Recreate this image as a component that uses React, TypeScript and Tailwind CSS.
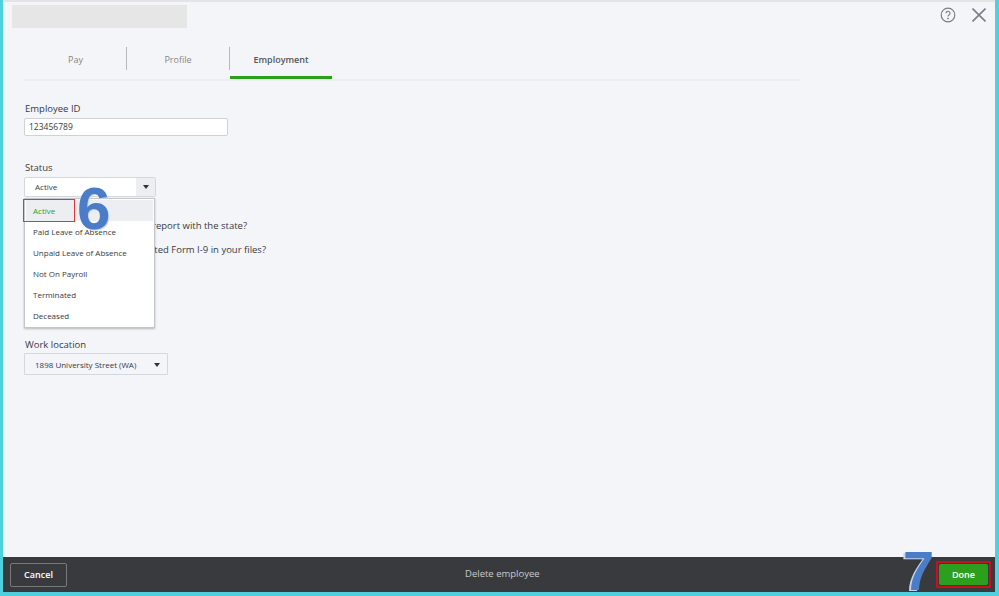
const statuses = ["Paid Leave of Absence", "Unpaid Leave of Absence", "Not On Payroll", "Terminated", "Deceased"];

function Caret() {
  return <div className="w-0 h-0 border-x-[3px] border-x-transparent border-t-[4px] border-t-[#333]" />;
}

function Tab({ label, active, divider, wide }: { label: string; active?: boolean; divider?: boolean; wide?: boolean }) {
  return (
    <div
      className={`${wide ? "w-[103px]" : "w-[102px]"} h-[33px] flex items-start pt-[1px] ${
        active ? "border-b-[3px] border-[#2ca01c]" : ""
      }`}
    >
      <div
        className={`w-full h-[23px] pt-[2px] flex items-center justify-center text-[9px] ${
          active ? "text-[#555] font-semibold" : "text-[#83868b]"
        } ${divider ? "border-r border-[#b8b8b8]" : ""}`}
      >
        {label}
      </div>
    </div>
  );
}

export default function App() {
  return (
    <div className="w-[999px] h-[596px] bg-[#4fd0de] pl-[3px] pr-[4px] pb-[4px] flex flex-col font-['Open_Sans',sans-serif] overflow-hidden">
      <div className="relative flex-1 bg-[#f4f5f8] border-t-2 border-[#e4e4e6] flex flex-col">
        {/* header */}
        <div className="h-[44px] flex justify-between pl-[9px] pr-[9px] pt-[3px]">
          <div className="w-[175px] h-[23px] bg-[#e6e6e6]" />
          <div className="flex items-start gap-[16px] pt-[3px]">
            <svg width="16" height="16" viewBox="0 0 16 16" fill="none" stroke="#7b7e84" className="mt-[-1px]">
              <circle cx="8" cy="8" r="6.8" strokeWidth="1.2" />
              <path d="M6 6.3a2 2 0 1 1 3 1.7c-.7.4-1 .8-1 1.6" strokeWidth="1.2" />
              <circle cx="8" cy="11.6" r=".5" fill="#7b7e84" />
            </svg>
            <svg width="14" height="14" viewBox="0 0 14 14" stroke="#7b7e84" strokeWidth="1.6">
              <path d="M.5.5l13 13M13.5.5L.5 13.5" />
            </svg>
          </div>
        </div>

        {/* tabs */}
        <div className="ml-[22px] w-[775px] border-b-2 border-[#eceded] flex">
          <Tab label="Pay" divider />
          <Tab label="Profile" divider wide />
          <Tab label="Employment" active />
        </div>

        {/* form */}
        <div className="relative pl-[21px] pt-[21px] text-[9.5px] text-[#393a3d] flex flex-col">
          <label className="h-[16px] leading-[14px] pl-[1px]">Employee ID</label>
          <div className="w-[204px] h-[18px] bg-white border border-[#cfd1d4] rounded-[2px] pl-[4px] flex items-center text-[8.5px]">
            123456789
          </div>

          <label className="h-[16px] leading-[14px] mt-[25px] pl-[1px]">Status</label>
          <div className="w-[132px] h-[20px] bg-white border border-[#d4d7dc] rounded-[2px] flex items-center justify-between text-[8px]">
            <span className="pl-[10px]">Active</span>
            <div className="w-[19px] h-full bg-[#eceef1] flex items-center justify-center">
              <Caret />
            </div>
          </div>

          <p className="mt-[20px] h-[24px] leading-[18px] w-[223px] text-right whitespace-nowrap">
            Did you file a new hire report with the state?
          </p>
          <p className="h-[23px] leading-[18px] w-[242px] text-right whitespace-nowrap">
            Do you have a completed Form I-9 in your files?
          </p>

          <label className="h-[15px] leading-[14px] mt-[74px] pl-[1px]">Work location</label>
          <div className="w-[144px] h-[22px] border border-[#d4d7dc] rounded-[1px] flex items-center justify-between text-[8px] pl-[10px] pr-[7px] pt-[2px]">
            <span>1898 University Street (WA)</span>
            <Caret />
          </div>

          {/* dropdown */}
          <ul className="absolute left-[21px] top-[117px] w-[131px] h-[130px] bg-white border border-[#c4c6ca] shadow-[0_1px_2px_rgba(0,0,0,0.25)] text-[8px] p-[1px]">
            <li className="h-[21px] bg-[#eceef1] text-[#2ca01c] flex items-center pl-[7px]">Active</li>
            {statuses.map((s) => (
              <li key={s} className="h-[21px] flex items-center pl-[7px]">
                {s}
              </li>
            ))}
          </ul>
          <div className="absolute left-[20px] top-[118px] w-[52px] h-[23px] border border-[#e8323c]" />
          <span className="absolute left-[74px] top-[106px] text-[60px] leading-[44px] font-bold text-[#4a7cc7] font-['Liberation_Sans',sans-serif] [text-shadow:1px_1px_0_#c6d4ee]">
            6
          </span>
        </div>

        {/* footer */}
        <div className="mt-auto h-[35px] bg-[#393a3d] flex items-center justify-between pl-[7px] pr-[4px] relative">
          <button className="w-[57px] h-[24px] border border-[#77797d] rounded-[2px] text-white text-[9px] font-semibold">
            Cancel
          </button>
          <span className="absolute left-[462px] text-[9.5px] text-[#c9cacc]">Delete employee</span>
          <div className="border-2 border-[#c8101e] p-[1px] w-[55px] h-[27px] flex">
            <button className="flex-1 bg-[#2ca01c] rounded-[2px] text-white text-[9px] font-semibold">Done</button>
          </div>
          <span className="absolute left-[900px] top-[-6px] text-[56px] leading-[40px] font-bold text-[#4a7cc7] font-['Liberation_Sans',sans-serif] [text-shadow:-2px_1px_0_#c6d4ee]">
            7
          </span>
        </div>
      </div>
    </div>
  );
}
